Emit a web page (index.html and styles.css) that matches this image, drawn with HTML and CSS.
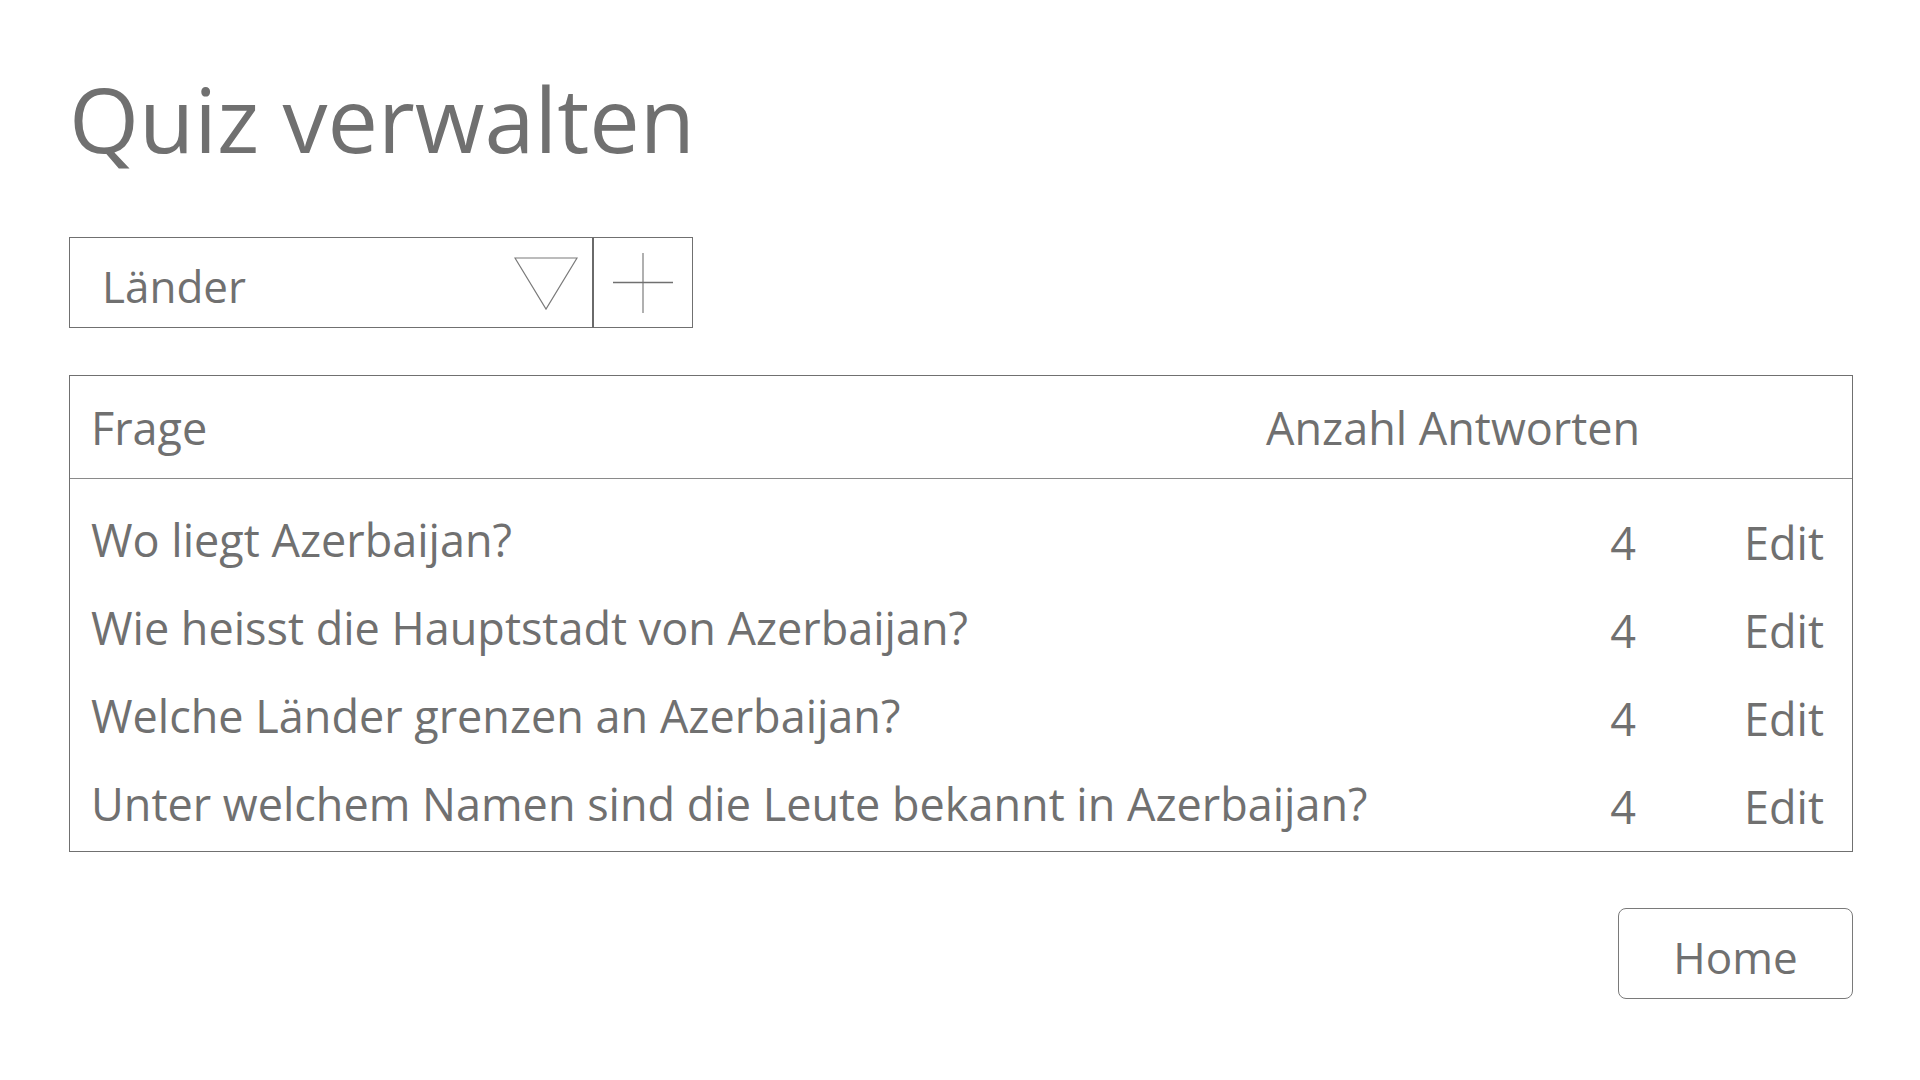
FILE: index.html
```html
<!DOCTYPE html>
<html lang="de">
<head>
<meta charset="utf-8">
<title>Quiz verwalten</title>
<link rel="stylesheet" href="styles.css">
</head>
<body>
<main class="page">
  <h1 class="title">Quiz verwalten</h1>

  <div class="picker">
    <div class="select">
      <span class="select-value">Länder</span>
      <svg class="select-arrow" width="64" height="54" viewBox="0 0 64 54">
        <polygon points="1,1 63,1 32,52" fill="none" stroke="#7a7a7a" stroke-width="1.2"/>
      </svg>
    </div>
    <div class="add">
      <svg width="60" height="60" viewBox="0 0 60 60">
        <line x1="30" y1="0" x2="30" y2="60" stroke="#b0b0b0" stroke-width="2"/>
        <line x1="0" y1="29.5" x2="60" y2="29.5" stroke="#707070" stroke-width="1.5"/>
      </svg>
    </div>
  </div>

  <section class="table">
    <div class="row head">
      <span class="c-q">Frage</span>
      <span class="c-n-head">Anzahl Antworten</span>
      <span class="c-e"></span>
    </div>
    <div class="body">
      <div class="row item">
        <span class="c-q">Wo liegt Azerbaijan?</span>
        <span class="c-n">4</span>
        <span class="c-e">Edit</span>
      </div>
      <div class="row item">
        <span class="c-q">Wie heisst die Hauptstadt von Azerbaijan?</span>
        <span class="c-n">4</span>
        <span class="c-e">Edit</span>
      </div>
      <div class="row item">
        <span class="c-q">Welche Länder grenzen an Azerbaijan?</span>
        <span class="c-n">4</span>
        <span class="c-e">Edit</span>
      </div>
      <div class="row item">
        <span class="c-q">Unter welchem Namen sind die Leute bekannt in Azerbaijan?</span>
        <span class="c-n">4</span>
        <span class="c-e">Edit</span>
      </div>
    </div>
  </section>

  <div class="footer">
    <button class="home">Home</button>
  </div>
</main>
</body>
</html>
```
FILE: styles.css
```css
html, body {
  margin: 0;
  padding: 0;
  background: #ffffff;
}

body {
  font-family: "Open Sans", "Noto Sans", "Liberation Sans", sans-serif;
  color: #707070;
}

.page {
  width: 1784px;
  margin-left: 69px;
  display: flex;
  flex-direction: column;
}

.title {
  margin: 56px 0 0 0;
  font-size: 90px;
  font-weight: 400;
  line-height: 124px;
  letter-spacing: 0;
}

.picker {
  margin-top: 57px;
  display: flex;
  width: 624px;
  height: 91px;
  box-sizing: border-box;
}

.select {
  flex: 1;
  display: flex;
  align-items: center;
  justify-content: space-between;
  border: 1px solid #707070;
  border-right: 2px solid #6a6a6a;
  padding: 0 14px 0 32px;
}

.select-value {
  font-size: 44px;
  line-height: 1;
  padding-top: 6px;
}

.select-arrow {
  display: block;
  margin-top: 2px;
}

.add {
  width: 98px;
  display: flex;
  align-items: center;
  justify-content: center;
  border: 1px solid #707070;
  border-left: none;
}

.add svg {
  display: block;
}

.table {
  margin-top: 47px;
  border: 1px solid #707070;
  height: 477px;
  box-sizing: border-box;
  display: flex;
  flex-direction: column;
}

.row {
  display: grid;
  grid-template-columns: minmax(0, 1fr) 376px 182px;
  padding: 0 28px 0 21px;
  align-items: center;
}

.head {
  height: 102px;
  border-bottom: 1px solid #8a8a8a;
  font-size: 45px;
}

.body {
  padding-top: 16px;
}

.item {
  height: 88px;
  font-size: 45px;
}

.c-q {
  white-space: nowrap;
}

.c-n-head {
  white-space: nowrap;
}

.c-n {
  text-align: right;
  padding-right: 6px;
  padding-top: 6px;
}

.c-e {
  text-align: right;
  padding-top: 6px;
}

.footer {
  display: flex;
  justify-content: flex-end;
  margin-top: 56px;
}

.home {
  width: 235px;
  height: 91px;
  border: 1px solid #7a7a7a;
  border-radius: 8px;
  background: #ffffff;
  font-family: inherit;
  font-size: 44px;
  color: #707070;
  padding: 6px 0 0 0;
}
```
